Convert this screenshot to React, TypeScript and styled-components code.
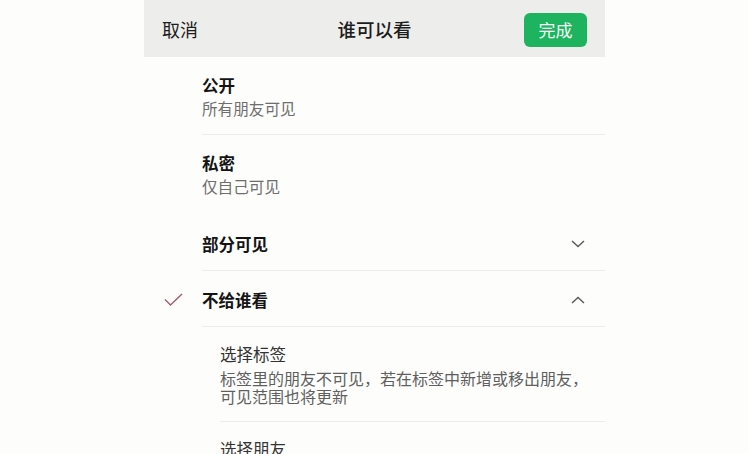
import React from 'react';
import styled, { createGlobalStyle } from 'styled-components';

const GlobalStyle = createGlobalStyle`
  html, body {
    margin: 0;
    padding: 0;
    background: #fdfdfb;
  }
  body {
    font-family: "Noto Sans CJK SC", "Noto Sans", sans-serif;
    -webkit-font-smoothing: antialiased;
  }
`;

const Screen = styled.div`
  width: 461px;
  height: 454px;
  margin: 0 auto;
  padding-left: 1px;
  background: #fdfdfb;
  overflow: hidden;
`;

const NavBar = styled.header`
  height: 57px;
  background: #ededeb;
  display: grid;
  grid-template-columns: 1fr auto 1fr;
  align-items: center;
  padding: 0 18px 0 18px;
  color: #1c1c1c;
  font-size: 18px;
`;

const Cancel = styled.span`
  justify-self: start;
  padding-top: 1px;
`;

const Title = styled.h1`
  margin: 0;
  font-size: 18.5px;
  font-weight: 500;
  padding-top: 1px;
`;

const DoneButton = styled.button`
  justify-self: end;
  width: 63px;
  height: 34px;
  border: none;
  border-radius: 6px;
  background: #1db35f;
  color: #f4fff7;
  font-family: inherit;
  font-size: 17px;
  padding: 0;
  margin-top: 2px;
`;

const Option = styled.div<{ $sub?: boolean }>`
  display: flex;
  align-items: flex-start;
  padding-left: ${(p) => (p.$sub ? 76 : 58)}px;
  position: relative;
`;

type Pad = 'double' | 'single' | 'sub';

const pads: Record<Pad, string> = {
  double: '17px 22px 14px 0',
  single: '18px 22px 15px 0',
  sub: '16px 22px 16px 0',
};

const Body = styled.div<{ $divider?: boolean; $pad: Pad; $extra?: number }>`
  flex: 1;
  min-width: 0;
  display: flex;
  align-items: center;
  padding: ${(p) => pads[p.$pad]};
  padding-bottom: ${(p) => (p.$extra ? `${p.$extra}px` : undefined)};
  border-bottom: 1px solid ${(p) => (p.$divider ? '#ececea' : 'transparent')};
  margin-right: -3px;
`;

const Texts = styled.div`
  flex: 1;
  display: flex;
  flex-direction: column;
`;

const Label = styled.div<{ $regular?: boolean }>`
  font-size: 16.5px;
  line-height: 22px;
  font-weight: ${(p) => (p.$regular ? 400 : 700)};
  color: ${(p) => (p.$regular ? '#333' : '#141414')};
`;

const Hint = styled.div`
  font-size: 15.6px;
  line-height: 24px;
  color: #6e6e6e;
`;

const Note = styled.div`
  margin-top: 4px;
  font-size: 16px;
  line-height: 18px;
  color: #5f5f5f;
  white-space: pre;
`;

const Check = styled.svg`
  position: absolute;
  left: 20px;
  top: 22px;
`;

const Chevron = styled.svg`
  flex: none;
  margin-right: 1px;
`;

const ChevronIcon = ({ up }: { up?: boolean }) => (
  <Chevron width="14" height="8" viewBox="0 0 14 8">
    <path
      d={up ? 'M1 7 L7 1.5 L13 7' : 'M1 1 L7 6.5 L13 1'}
      fill="none"
      stroke="#5a5a5a"
      strokeWidth="1.4"
    />
  </Chevron>
);

const tagNote = '标签里的朋友不可见，若在标签中新增或移出朋友，\n可见范围也将更新';

function App() {
  return (
    <>
      <GlobalStyle />
      <Screen>
        <NavBar>
          <Cancel>取消</Cancel>
          <Title>谁可以看</Title>
          <DoneButton>完成</DoneButton>
        </NavBar>

        <Option>
          <Body $pad="double" $divider>
            <Texts>
              <Label>公开</Label>
              <Hint>所有朋友可见</Hint>
            </Texts>
          </Body>
        </Option>

        <Option>
          <Body $pad="double" $extra={16}>
            <Texts>
              <Label>私密</Label>
              <Hint>仅自己可见</Hint>
            </Texts>
          </Body>
        </Option>

        <Option>
          <Body $pad="single" $divider>
            <Texts>
              <Label>部分可见</Label>
            </Texts>
            <ChevronIcon />
          </Body>
        </Option>

        <Option>
          <Check width="20" height="14" viewBox="0 0 20 14">
            <path d="M1 6.5 L6.5 12 L18 1" fill="none" stroke="#a0607a" strokeWidth="1.5" />
          </Check>
          <Body $pad="single" $divider>
            <Texts>
              <Label>不给谁看</Label>
            </Texts>
            <ChevronIcon up />
          </Body>
        </Option>

        <Option $sub>
          <Body $pad="sub" $divider>
            <Texts>
              <Label $regular>选择标签</Label>
              <Note>{tagNote}</Note>
            </Texts>
          </Body>
        </Option>

        <Option $sub>
          <Body $pad="sub">
            <Texts>
              <Label $regular>选择朋友</Label>
            </Texts>
          </Body>
        </Option>
      </Screen>
    </>
  );
}

export default App;
